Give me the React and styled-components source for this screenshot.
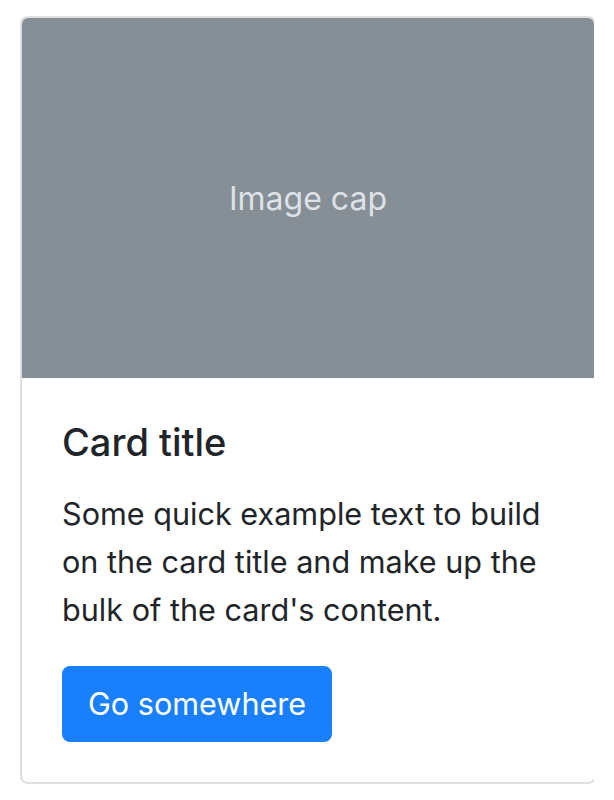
import styled, { createGlobalStyle } from "styled-components";

const GlobalStyle = createGlobalStyle`
  body {
    margin: 16px 20px;
    background: #fff;
    font-family: Inter, "Liberation Sans", sans-serif;
    color: #212529;
  }
`;

const Card = styled.div`
  width: 576px;
  box-sizing: border-box;
  border: 2px solid rgba(0, 0, 0, 0.125);
  border-radius: 8px;
  overflow: hidden;
  display: flex;
  flex-direction: column;
`;

const ImageCap = styled.div`
  height: 360px;
  background: #868e96;
  color: #dee2e6;
  font-size: 32px;
  display: flex;
  align-items: center;
  justify-content: center;
`;

const Body = styled.div`
  padding: 40px;
  display: flex;
  flex-direction: column;
  align-items: flex-start;
`;

const Title = styled.h5`
  margin: 0 0 24px;
  font-size: 38px;
  font-weight: 500;
  line-height: 48px;
`;

const Text = styled.p`
  margin: 0 0 32px;
  font-size: 30.6px;
  line-height: 48px;
`;

const Button = styled.a`
  display: inline-block;
  padding: 12px 24px;
  font-size: 30.6px;
  line-height: 48px;
  color: #fff;
  background: #1a7ffb;
  border: 2px solid #1a7ffb;
  border-radius: 8px;
  text-decoration: none;
  cursor: pointer;
`;

const App = () => {
  return (
    <>
      <GlobalStyle />
      <Card>
        <ImageCap>Image cap</ImageCap>
        <Body>
          <Title>Card title</Title>
          <Text>
            Some quick example text to build on the card title and make up the
            bulk of the card's content.
          </Text>
          <Button>Go somewhere</Button>
        </Body>
      </Card>
    </>
  );
};

export default App;
